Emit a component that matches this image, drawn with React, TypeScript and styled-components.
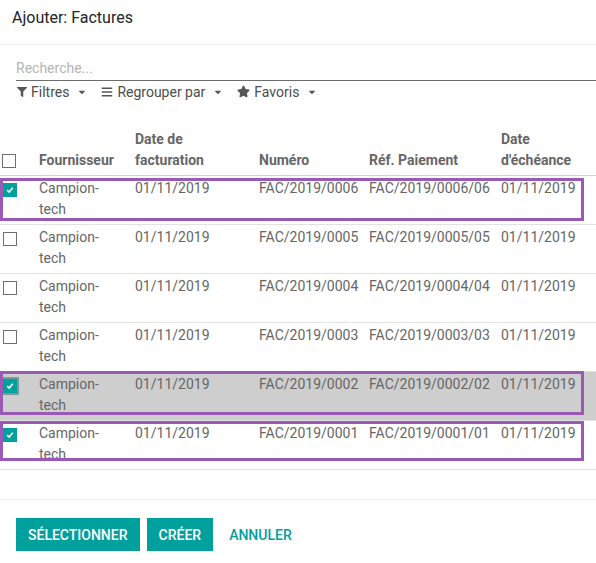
import React from "react";
import styled, { createGlobalStyle } from "styled-components";
import { FaFilter, FaBars, FaStar, FaCaretDown } from "react-icons/fa";

const GlobalStyle = createGlobalStyle`
  body {
    margin: 0;
    background: #fff;
    font-family: Roboto, "Noto Sans", sans-serif;
  }
`;

interface Invoice {
  numero: string;
  ref: string;
  checked: boolean;
  focused?: boolean;
  mark?: { top: number; bottom: number };
}

const invoices: Invoice[] = [
  { numero: "FAC/2019/0006", ref: "FAC/2019/0006/06", checked: true, mark: { top: 2, bottom: 3 } },
  { numero: "FAC/2019/0005", ref: "FAC/2019/0005/05", checked: false },
  { numero: "FAC/2019/0004", ref: "FAC/2019/0004/04", checked: false },
  { numero: "FAC/2019/0003", ref: "FAC/2019/0003/03", checked: false },
  { numero: "FAC/2019/0002", ref: "FAC/2019/0002/02", checked: true, focused: true, mark: { top: -1, bottom: 5 } },
  { numero: "FAC/2019/0001", ref: "FAC/2019/0001/01", checked: true, mark: { top: 0, bottom: 8 } },
];

const CheckBox: React.FC<{ checked?: boolean; focused?: boolean }> = ({ checked, focused }) => (
  <Box $checked={checked} $focused={focused}>
    {checked && (
      <svg width="8" height="8" viewBox="0 0 8 8">
        <path d="M1.2 4.2 L3.2 6 L6.8 1.8" stroke="#fff" strokeWidth="1.6" fill="none" />
      </svg>
    )}
  </Box>
);

const App: React.FC = () => {
  return (
    <Modal>
      <GlobalStyle />
      <Header>Ajouter: Factures</Header>

      <SearchArea>
        <SearchInput placeholder="Recherche..." />
        <Filters>
          <FilterItem>
            <FaFilter size={10} />
            <span>Filtres</span>
            <Caret />
          </FilterItem>
          <FilterItem>
            <FaBars size={12} />
            <span>Regrouper par</span>
            <Caret />
          </FilterItem>
          <FilterItem>
            <FaStar size={13} />
            <span>Favoris</span>
            <Caret />
          </FilterItem>
        </Filters>
      </SearchArea>

      <Table>
        <HeadRow>
          <CheckCell>
            <CheckBox />
          </CheckCell>
          <HeadCell $pr={14}>Fournisseur</HeadCell>
          <HeadCell>Date de facturation</HeadCell>
          <HeadCell>Numéro</HeadCell>
          <HeadCell>Réf. Paiement</HeadCell>
          <HeadCell>Date d'échéance</HeadCell>
        </HeadRow>

        {invoices.map((inv) => (
          <Row key={inv.numero} $selected={inv.focused}>
            <CheckCell>
              <CheckBox checked={inv.checked} focused={inv.focused} />
            </CheckCell>
            <Cell $pr={14}>Campion-tech</Cell>
            <Cell>01/11/2019</Cell>
            <Cell>{inv.numero}</Cell>
            <Cell>{inv.ref}</Cell>
            <Cell>01/11/2019</Cell>
            {inv.mark && <Highlight style={{ top: inv.mark.top, bottom: inv.mark.bottom }} />}
          </Row>
        ))}
      </Table>

      <Footer>
        <Button>Sélectionner</Button>
        <Button>Créer</Button>
        <LinkButton>Annuler</LinkButton>
      </Footer>
    </Modal>
  );
};

export default App;

const Modal = styled.div`
  width: 596px;
  height: 563px;
  background: #fff;
  color: #4c4c4c;
  font-size: 14px;
  overflow: hidden;
`;

const Header = styled.div`
  box-sizing: border-box;
  height: 45px;
  padding: 7px 12px 0;
  font-size: 16px;
  line-height: 22px;
  color: #212529;
  border-bottom: 1px solid #e9ecef;
`;

const SearchArea = styled.div`
  padding: 12px 0 0 16px;
`;

const SearchInput = styled.input`
  display: block;
  box-sizing: border-box;
  width: 100%;
  height: 24px;
  padding: 0 0 1px;
  border: none;
  border-bottom: 1px solid #6c6c6c;
  outline: none;
  font-family: Roboto, sans-serif;
  font-size: 14px;
  color: #4c4c4c;
  &::placeholder {
    color: #b5b5b5;
  }
`;

const Filters = styled.div`
  display: flex;
  align-items: center;
  gap: 14px;
  height: 21px;
  margin-left: 1px;
`;

const FilterItem = styled.div`
  display: flex;
  align-items: center;
  gap: 4px;
  color: #4c4c4c;
  line-height: 20px;
  svg {
    color: #555;
  }
`;

const Caret = styled(FaCaretDown)`
  margin-left: 4px;
  width: 10px;
  height: 10px;
`;

const Table = styled.div`
  margin-top: 27px;
`;

const grid = `
  display: grid;
  grid-template-columns: 39px 96px 124px 110px 132px 1fr;
`;

const HeadRow = styled.div`
  ${grid};
  align-items: end;
  padding-bottom: 4px;
  border-bottom: 1px solid #cfd3d7;
  line-height: 21px;
`;

const HeadCell = styled.div<{ $pr?: number }>`
  padding-right: ${(p) => p.$pr ?? 10}px;
  font-weight: 700;
  color: #666;
`;

const Row = styled.div<{ $selected?: boolean }>`
  ${grid};
  position: relative;
  align-items: start;
  padding: 2px 0 4px;
  line-height: 21px;
  border-bottom: 1px solid #e2e2e2;
  background: ${(p) => (p.$selected ? "#cecece" : "#fff")};
`;

const Cell = styled.div<{ $pr?: number }>`
  padding-right: ${(p) => p.$pr ?? 6}px;
  color: #666;
  white-space: normal;
`;

const CheckCell = styled.div`
  display: flex;
  padding-left: 3px;
  padding-top: 5px;
  ${HeadRow} & {
    padding-left: 2px;
    padding-bottom: 3px;
  }
`;

const Box = styled.span<{ $checked?: boolean; $focused?: boolean }>`
  box-sizing: border-box;
  display: inline-flex;
  align-items: center;
  justify-content: center;
  width: 14px;
  height: 14px;
  border: 1px solid ${(p) => (p.$checked ? "#00a09d" : "#6f6f6f")};
  background: ${(p) => (p.$checked ? "#00a09d" : "#fff")};
  box-shadow: ${(p) => (p.$focused ? "0 0 0 2px #7a9a98" : "none")};
`;

const Highlight = styled.div`
  position: absolute;
  left: 0;
  right: 12px;
  border: 3px solid #9b59b6;
  pointer-events: none;
  z-index: 2;
`;

const Footer = styled.div`
  display: flex;
  gap: 7px;
  margin-top: 29px;
  padding: 18px 16px 0;
  border-top: 1px solid #e9ecef;
`;

const Button = styled.button`
  height: 33px;
  padding: 0 12px;
  border: none;
  background: #00a09d;
  color: #fff;
  font-family: Roboto, sans-serif;
  font-size: 14px;
  font-weight: 500;
  text-transform: uppercase;
`;

const LinkButton = styled(Button)`
  background: transparent;
  color: #00a09d;
  padding: 0 9px;
`;
